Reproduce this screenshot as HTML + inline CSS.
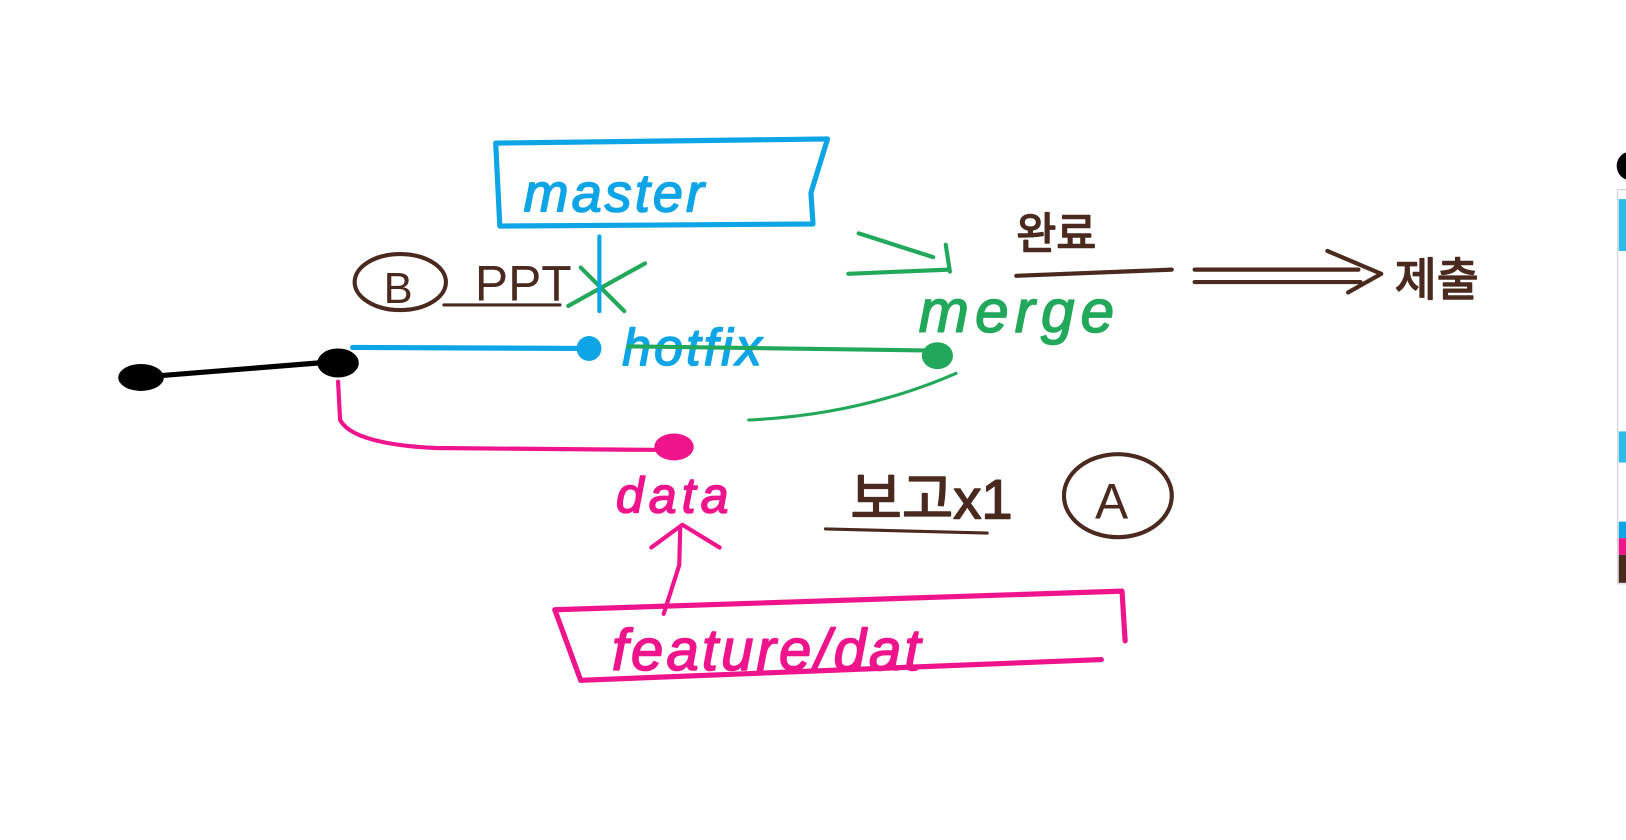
<!DOCTYPE html>
<html><head><meta charset="utf-8"><style>
html,body{margin:0;padding:0;background:#fff;width:1626px;height:840px;overflow:hidden}
svg{position:absolute;left:0;top:0}
text{font-family:"Liberation Sans","Noto Sans CJK KR",sans-serif;stroke-width:1.5}
</style></head><body>
<svg width="1626" height="840" viewBox="0 0 1568 810" preserveAspectRatio="none" fill="none" stroke-linecap="round" stroke-linejoin="round">
<!-- master box -->
<path d="M478 138 L798 134 L782 186 L784 216 L482 218 Z" stroke="#0ea5e6" stroke-width="5"/>
<text x="505" y="204" fill="#0ea5e6" stroke="#0ea5e6" font-size="52" font-style="italic" letter-spacing="3">master</text>
<!-- B PPT -->
<ellipse cx="386" cy="272" rx="44" ry="27" stroke="#4a2a1e" stroke-width="4"/>
<text x="370" y="292" fill="#4a2a1e" font-size="42">B</text>
<text x="458" y="290" fill="#4a2a1e" font-size="48">PPT</text>
<path d="M428 294 L540 294" stroke="#4a2a1e" stroke-width="3"/>
<path d="M548 295 L622 254 M560 258 L602 300" stroke="#22a85a" stroke-width="4"/>
<path d="M578 228 L578 300" stroke="#0ea5e6" stroke-width="4"/>
<!-- main lines -->
<path d="M120 365 L332 348" stroke="#000" stroke-width="5"/>
<ellipse cx="136" cy="364" rx="22" ry="13" fill="#000"/>
<ellipse cx="326" cy="350" rx="20" ry="14" fill="#000"/>
<path d="M340 335 L562 336" stroke="#0ea5e6" stroke-width="5"/>
<circle cx="568" cy="336" r="12" fill="#0ea5e6"/>
<text x="600" y="352" fill="#0ea5e6" stroke="#0ea5e6" font-size="50" font-style="italic" letter-spacing="3">hotfix</text>
<path d="M606 334 L900 338" stroke="#22a85a" stroke-width="4"/>
<ellipse cx="904" cy="343" rx="15" ry="13" fill="#22a85a"/>
<path d="M722 405 Q830 400 922 360" stroke="#22a85a" stroke-width="3"/>
<path d="M818 264 L915 260 M828 225 L900 248 M912 236 L916 262" stroke="#22a85a" stroke-width="4"/>
<!-- merge -->
<text x="980" y="240" fill="#4a2a1e" stroke="#4a2a1e" font-size="42">완료</text>
<path d="M980 266 L1130 260" stroke="#4a2a1e" stroke-width="4"/>
<text x="886" y="320" fill="#22a85a" stroke="#22a85a" font-size="58" font-style="italic" letter-spacing="6">merge</text>
<path d="M1152 260 L1310 260 M1152 272 L1312 272 M1280 242 L1332 264 L1300 282" stroke="#4a2a1e" stroke-width="4"/>
<text x="1345" y="285" fill="#4a2a1e" stroke="#4a2a1e" font-size="44">제출</text>
<!-- pink -->
<path d="M326 368 L328 405 Q340 428 420 432 L650 434" stroke="#f0148c" stroke-width="4"/>
<ellipse cx="650" cy="431" rx="19" ry="13" fill="#f0148c"/>
<text x="594" y="494" fill="#f0148c" stroke="#f0148c" font-size="48" font-style="italic" letter-spacing="5">data</text>
<path d="M640 592 L655 545 L656 508 M628 528 L658 506 L694 528" stroke="#f0148c" stroke-width="4"/>
<path d="M535 588 L1082 570 L1085 618 M535 588 L560 656 L1062 636" stroke="#f0148c" stroke-width="5"/>
<text x="590" y="646" fill="#f0148c" stroke="#f0148c" font-size="56" font-style="italic" letter-spacing="3">feature/dat</text>
<!-- brown A -->
<text x="820" y="500" fill="#4a2a1e" stroke="#4a2a1e" font-size="54">보고x1</text>
<path d="M796 510 L952 514" stroke="#4a2a1e" stroke-width="3"/>
<ellipse cx="1078" cy="478" rx="52" ry="40" stroke="#4a2a1e" stroke-width="4"/>
<text x="1056" y="500" fill="#4a2a1e" font-size="48">A</text>
<!-- toolbar -->
<circle cx="1573" cy="160" r="14" fill="#000"/>
<rect x="1560" y="183" width="70" height="380" fill="#fff" stroke="#ccc"/>
<rect x="1561" y="192" width="70" height="50" fill="#2bbbe8"/>
<rect x="1561" y="416" width="70" height="30" fill="#2bbbe8"/>
<rect x="1561" y="503" width="70" height="16" fill="#0ea5e6"/>
<rect x="1561" y="519" width="70" height="16" fill="#f0148c"/>
<rect x="1561" y="535" width="70" height="27" fill="#4a2a1e"/>
</svg>
</body></html>
